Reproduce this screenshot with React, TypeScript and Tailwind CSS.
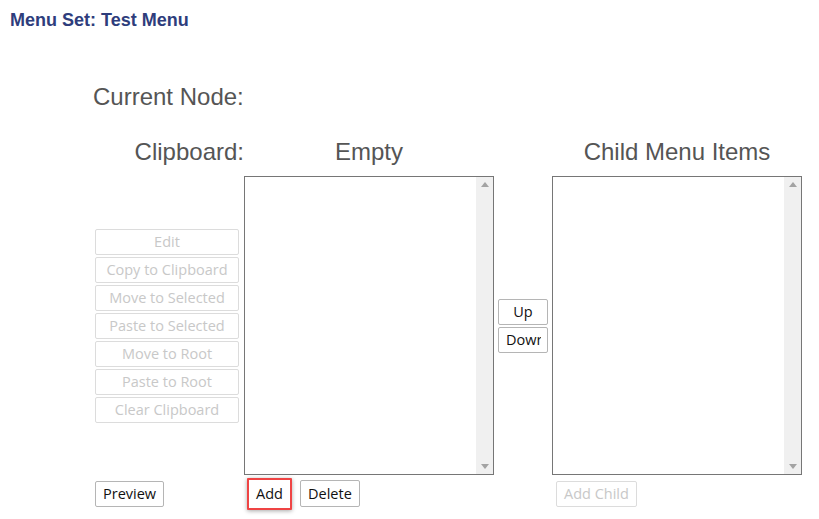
import React from 'react';

const sideButtons = [
  'Edit',
  'Copy to Clipboard',
  'Move to Selected',
  'Paste to Selected',
  'Move to Root',
  'Paste to Root',
  'Clear Clipboard',
];

const btnFont = { fontFamily: '"Open Sans", "Noto Sans", sans-serif' };

const ListBox: React.FC = () => (
  <div className="flex h-[299px] w-[250px] border border-[#767676] bg-white">
    <div className="flex-1" />
    <div className="flex w-[17px] flex-col items-center justify-between bg-[#f0f0f0] py-[5px]">
      <svg width="8" height="5" viewBox="0 0 8 5">
        <path d="M0 5 L4 0 L8 5 Z" fill="#a3a3a3" />
      </svg>
      <svg width="8" height="5" viewBox="0 0 8 5">
        <path d="M0 0 L4 5 L8 0 Z" fill="#a3a3a3" />
      </svg>
    </div>
  </div>
);

const App: React.FC = () => {
  return (
    <div className="h-[519px] w-[819px] bg-white" style={{ fontFamily: '"Liberation Sans", Arial, sans-serif' }}>
      <div className="px-[10px] pt-[9px] text-[18px] font-bold leading-[22px] text-[#2e3d7c]">Menu Set: Test Menu</div>

      <div className="pl-[93px] pt-[51px]">
        <div className="text-[24px] leading-[30px] text-[#555]">Current Node:</div>

        {/* headings */}
        <div className="mt-[25px] flex items-end text-[24px] leading-[30px] text-[#555]">
          <div className="w-[151px] text-right">Clipboard:</div>
          <div className="w-[250px] text-center">Empty</div>
          <div className="w-[58px]" />
          <div className="w-[250px] text-center">Child Menu Items</div>
        </div>

        {/* lists row */}
        <div className="mt-[9px] flex items-center" style={btnFont}>
          <div className="flex w-[151px] flex-col gap-[2px] pl-[2px]">
            {sideButtons.map((b) => (
              <button
                key={b}
                disabled
                className="h-[26px] w-[144px] rounded-[2px] border border-[#dcdcdc] bg-white text-[14.5px] text-[#c8c8c8]"
              >
                {b}
              </button>
            ))}
          </div>
          <ListBox />
          <div className="flex w-[58px] flex-col gap-[2px] pl-[4px]">
            <button className="h-[26px] w-[50px] rounded-[2px] border border-[#b5b5b5] bg-white text-[14.5px] text-[#111]">
              Up
            </button>
            <button
              title="Down"
              className="flex h-[26px] w-[50px] items-center rounded-[2px] border border-[#b5b5b5] bg-white pl-[7px] text-[14.5px] text-[#111]"
            >
              <span className="block w-[35px] overflow-hidden whitespace-nowrap text-left">Dowr</span>
            </button>
          </div>
          <ListBox />
        </div>

        {/* bottom row */}
        <div className="mt-[3px] flex items-start" style={btnFont}>
          <div className="w-[151px] pl-[2px] pt-[3px]">
            <button className="h-[26px] rounded-[2px] border border-[#b5b5b5] bg-white px-[7px] text-[14.5px] text-[#111]">
              Preview
            </button>
          </div>
          <div className="flex w-[250px] items-start gap-[8px] pl-[3px]">
            <div className="flex h-[32px] w-[45px] items-center justify-center rounded-[1px] border-2 border-[#ef4444] bg-white shadow-[0_1px_4px_rgba(0,0,0,0.35)]">
              <button className="text-[14.5px] text-[#111]">Add</button>
            </div>
            <button className="mt-[2px] h-[27px] rounded-[2px] border border-[#b5b5b5] bg-white px-[7px] text-[14.5px] text-[#111]">
              Delete
            </button>
          </div>
          <div className="w-[58px]" />
          <div className="pl-[4px] pt-[3px]">
            <button
              disabled
              className="h-[26px] rounded-[2px] border border-[#dcdcdc] bg-white px-[7px] text-[14.5px] text-[#c8c8c8]"
            >
              Add Child
            </button>
          </div>
        </div>
      </div>
    </div>
  );
};

export default App;
